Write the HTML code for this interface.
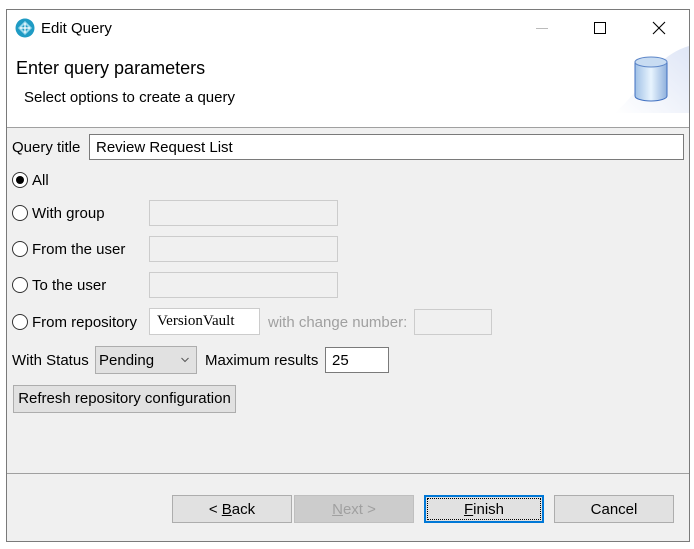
<!DOCTYPE html>
<html><head><meta charset="utf-8"><style>
*{box-sizing:border-box;margin:0;padding:0}
body{width:694px;height:549px;background:#fff;position:relative;font-family:"Liberation Sans",Arial,sans-serif;font-size:15px;color:#000;overflow:hidden}
.a{position:absolute}
.win{left:6px;top:9px;width:684px;height:533px;border:1px solid #7a7a7a;background:#f0f0f0}
.t{position:absolute;white-space:nowrap;line-height:18px}
.radio{position:absolute;width:16px;height:16px;border:1px solid #333;border-radius:50%;background:#fff}
.dis{position:absolute;border:1px solid #ccc;background:#f0f0f0}
.btn{position:absolute;height:28px;border:1px solid #adadad;background:#e1e1e1;text-align:center;line-height:28px}
</style></head><body>
<div class="a win"></div>
<div class="a" style="left:7px;top:10px;width:682px;height:117px;background:#fff"></div>
<div class="a" style="left:7px;top:127px;width:682px;height:1px;background:#a0a0a0"></div>
<div class="a" style="left:7px;top:473px;width:682px;height:1px;background:#a0a0a0"></div>
<svg class="a" style="left:15px;top:18px" width="20" height="20" viewBox="0 0 20 20"><circle cx="10" cy="10" r="9.5" fill="#1f9bc4"/><path d="M10 3 L17 10 L10 17 L3 10Z" fill="#9ad8ec"/><circle cx="10" cy="10" r="3" fill="#1f9bc4"/><path d="M10 5v10M5 10h10" stroke="#fff" stroke-width="1.2"/></svg>
<div class="t" style="left:41px;top:20px;font-size:15px">Edit Query</div>
<div class="a" style="left:536px;top:28px;width:12px;height:1px;background:#bbb"></div>
<div class="a" style="left:594px;top:22px;width:12px;height:12px;border:1px solid #000"></div>
<svg class="a" style="left:652px;top:21px" width="14" height="14"><path d="M1 1L13 13M13 1L1 13" stroke="#000" stroke-width="1.1"/></svg>
<div class="t" style="left:16px;top:58px;font-size:18px;line-height:20px">Enter query parameters</div>
<div class="t" style="left:24px;top:89px">Select options to create a query</div>
<svg class="a" style="left:615px;top:46px" width="74" height="67" viewBox="0 0 74 67"><defs><linearGradient id="g" x1="0" x2="1"><stop offset="0" stop-color="#9fc0e6"/><stop offset=".5" stop-color="#e8f4fe"/><stop offset="1" stop-color="#8fb0dc"/></linearGradient><linearGradient id="bg" x1="0" x2="1" y1="1" y2="0"><stop offset="0" stop-color="#fff"/><stop offset="1" stop-color="#dfe6f6"/></linearGradient></defs><path d="M74 0 C40 10 30 40 0 67 H74Z" fill="url(#bg)"/><path d="M20 16 v34 a16 5 0 0 0 32 0 v-34" fill="url(#g)" stroke="#3f6fc0" stroke-width="1"/><ellipse cx="36" cy="16" rx="16" ry="5" fill="#c8dcf2" stroke="#5d86c8"/></svg>
<div class="t" style="left:12px;top:139px">Query title</div>
<div class="a" style="left:89px;top:134px;width:595px;height:26px;border:1px solid #7a7a7a;background:#fff"></div>
<div class="t" style="left:96px;top:139px">Review Request List</div>
<div class="radio" style="left:12px;top:172px"><div class="a" style="left:3px;top:3px;width:8px;height:8px;border-radius:50%;background:#000"></div></div>
<div class="t" style="left:32px;top:172px">All</div>
<div class="radio" style="left:12px;top:205px"></div><div class="t" style="left:32px;top:205px">With group</div>
<div class="dis" style="left:149px;top:200px;width:189px;height:26px"></div>
<div class="radio" style="left:12px;top:241px"></div><div class="t" style="left:32px;top:241px">From the user</div>
<div class="dis" style="left:149px;top:236px;width:189px;height:26px"></div>
<div class="radio" style="left:12px;top:277px"></div><div class="t" style="left:32px;top:277px">To the user</div>
<div class="dis" style="left:149px;top:272px;width:189px;height:26px"></div>
<div class="radio" style="left:12px;top:314px"></div><div class="t" style="left:32px;top:314px">From repository</div>
<div class="a" style="left:149px;top:308px;width:111px;height:27px;border:1px solid #ccc;background:#fff"></div>
<div class="t" style="left:157px;top:312px;font-family:'Liberation Serif',serif;font-size:15px">VersionVault</div>
<div class="t" style="left:268px;top:314px;color:#a0a0a0">with change number:</div>
<div class="dis" style="left:414px;top:309px;width:78px;height:26px"></div>
<div class="t" style="left:12px;top:352px">With Status</div>
<div class="a" style="left:95px;top:346px;width:102px;height:28px;border:1px solid #adadad;background:#e1e1e1"></div>
<div class="t" style="left:99px;top:352px">Pending</div>
<svg class="a" style="left:181px;top:357px" width="8" height="6"><path d="M0.5 1L4 4.5L7.5 1" stroke="#555" fill="none"/></svg>
<div class="t" style="left:205px;top:352px">Maximum results</div>
<div class="a" style="left:325px;top:347px;width:64px;height:26px;border:1px solid #7a7a7a;background:#fff"></div>
<div class="t" style="left:332px;top:352px">25</div>
<div class="btn" style="left:13px;top:385px;width:223px;height:28px;line-height:26px">Refresh repository configuration</div>
<div class="btn" style="left:172px;top:495px;width:120px;line-height:27px"><span>&lt; <u>B</u>ack</span></div>
<div class="btn" style="left:294px;top:495px;width:120px;line-height:27px;border-color:#bfbfbf;background:#cccccc;color:#a0a0a0">
<u>N</u>ext &gt;</div>
<div class="btn" style="left:424px;top:495px;width:120px;line-height:27px;border:1px solid #0078d7;box-shadow:inset 0 0 0 1px #0078d7"><div class="a" style="left:2px;top:2px;right:2px;bottom:2px;border:1px dotted #000"></div><u>F</u>inish</div>
<div class="btn" style="left:554px;top:495px;width:120px;line-height:27px">Cancel</div>
</body></html>
